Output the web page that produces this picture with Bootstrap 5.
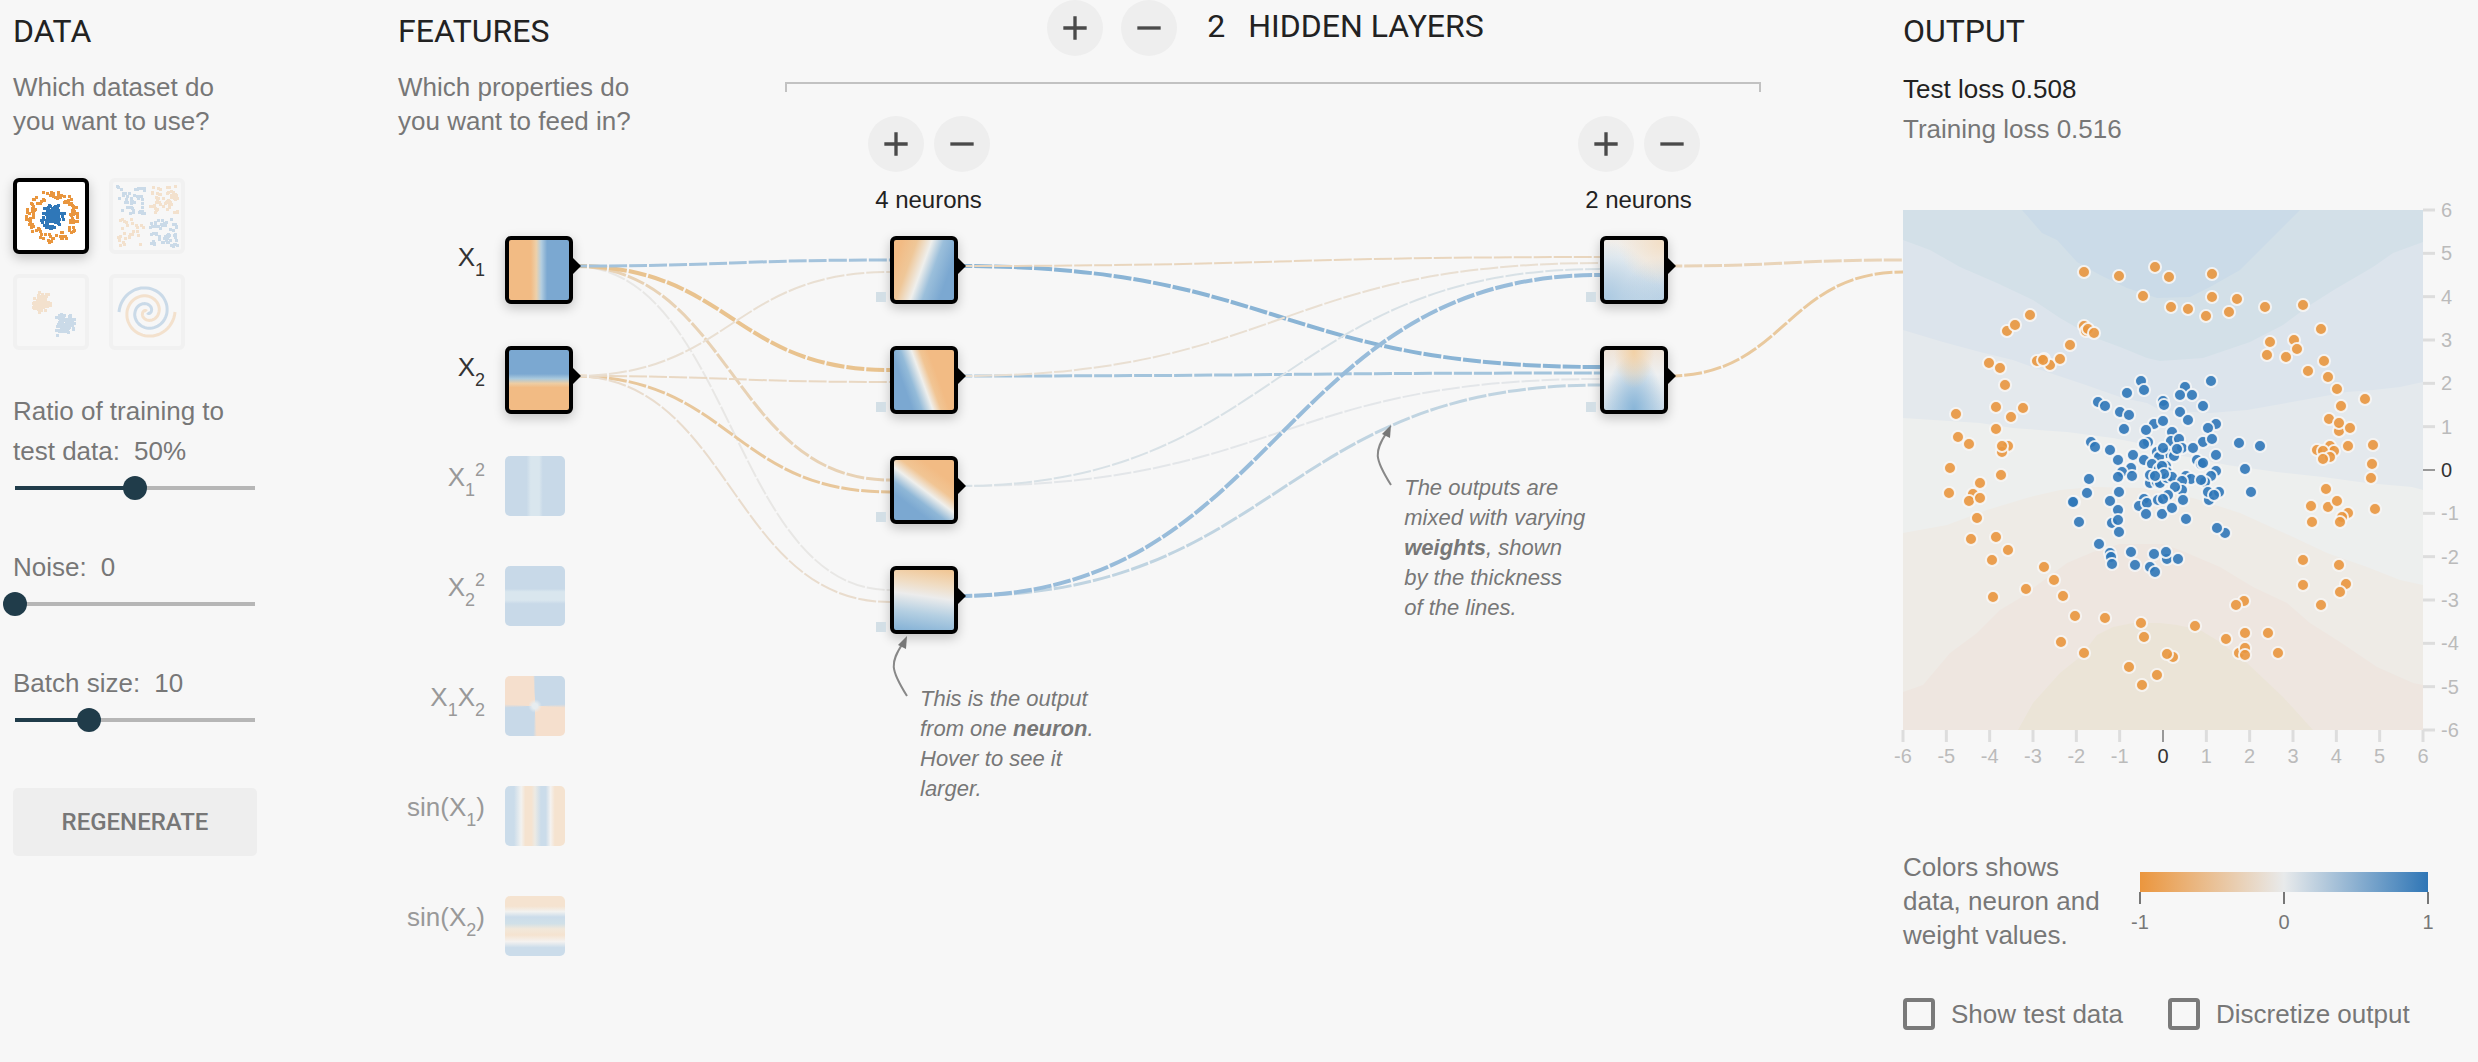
<!DOCTYPE html>
<html lang="en">
<head>
<meta charset="utf-8">
<meta name="viewport" content="width=device-width, initial-scale=1">
<title>Neural Network Playground</title>
<link href="https://cdn.jsdelivr.net/npm/bootstrap@5.3.0/dist/css/bootstrap.min.css" rel="stylesheet">
<style>
:root{--orange:#e9963e;--blue:#2f77b8;--ink:#222;--soft:#777}
body{background:#f7f7f7;color:var(--soft);font:400 26px/34px "Liberation Sans",Arial,sans-serif}
.board{padding-left:13px}
.links{width:100%;height:100%;pointer-events:none}
.links path{fill:none;stroke-dasharray:18 2;stroke-dashoffset:4}
.heading{font:400 32px/40px Roboto,sans-serif;color:var(--ink);margin:11px 0 19px}

/* data column */
.data-col{width:244px;margin-right:141px}
.sets{display:grid;grid-template-columns:repeat(2,76px);gap:20px;margin:40px 0 41px}
.set-btn{width:76px;height:76px;padding:0;border:4px solid #ddd;border-radius:6px;opacity:.22;background:transparent}
.set-btn.active{border-color:#000;background:#fff;opacity:1;box-shadow:0 4px 12px rgba(0,0,0,.22)}
.set-btn svg{display:block;margin:-4px}
.control{margin-bottom:47px}
.control label{display:block;line-height:40px;margin-bottom:5px}
.control output{margin-left:14px}
.slider{display:block;width:calc(100% + 20px);height:24px;margin:0 -10px;appearance:none;-webkit-appearance:none;background:transparent}
.slider::-webkit-slider-runnable-track{height:4px;background:linear-gradient(90deg,#203c4a var(--at),#b6b6b6 var(--at)) center/calc(100% - 24px) 4px no-repeat;border-radius:0}
.slider::-webkit-slider-thumb{-webkit-appearance:none;width:24px;height:24px;margin-top:-10px;border:0;border-radius:50%;background:#203c4a;box-shadow:none}
.regen{height:68px;margin-top:56px;border:0;border-radius:5px;background:#eee;color:var(--soft);font:500 24px/30px Roboto,sans-serif}

/* features */
.features-col{width:183px}
.features-col p{white-space:nowrap}
.features{margin-top:98px}
.feature{height:110px;gap:20px}
.feature .term{width:87px;text-align:right;line-height:42px;white-space:nowrap;color:#999}
.feature.on .term{color:#333}
.term sub,.term sup{position:static;font-size:18px;line-height:0}
.term sub{vertical-align:-10px}
.term sup{vertical-align:10px}
.tile{display:block;width:60px;height:60px;padding:0;border:0;border-radius:5px}
.unit{position:relative;z-index:1;width:68px;height:68px;padding:0;border:4px solid #000;border-radius:6px;background-origin:border-box;box-shadow:0 4px 12px rgba(0,0,0,.22)}
.unit::after{content:"";position:absolute;left:100%;top:18px;border:8px solid transparent;border-left-color:#000;border-right:0;margin-left:4px}
.bias{position:absolute;left:-18px;top:52px;width:10px;height:10px;background:#d3dfe6}
.p-x1{background-image:linear-gradient(90deg,#f2bb84 38%,#edd0a9 46%,#b5cfe0 53%,#7ba8d1 62%)}
.p-x2{background-image:linear-gradient(180deg,#7ba8d1 41%,#a9c9dd 48%,#edcda4 55%,#f2bb84 61%)}
.p-x1s{background:linear-gradient(90deg,#c8d9e8 36%,#d9e6ee 43%,#d9e6ee 57%,#c8d9e8 63%)}
.p-x2s{background:linear-gradient(180deg,#c8d9e8 38%,#d9e6ee 43%,#d9e6ee 57%,#c8d9e8 63%)}
.p-x1x2{background:radial-gradient(circle,#e7edf0 6%,transparent 16%),conic-gradient(#c8d9e8 24%,#f5dfcd 26% 49%,#c8d9e8 51% 74%,#f5dfcd 76% 99%,#c8d9e8)}
.p-sin1{background:linear-gradient(90deg,#cbdcea 15%,#f2f2f0 27%,#f5e3d0 34%,#f5e3d0 44%,#eceae4 50%,#cbdcea 60%,#cbdcea 68%,#f4f2f0 76%,#f5e3d0 83%)}
.p-sin2{background:linear-gradient(180deg,#f5e3d0 17%,#f2f2f0 26%,#cbdcea 35%,#d0e0e8 46%,#f2e8da 55%,#f5e3d0 65%,#f4f2f0 76%,#cbdcea 86%)}
.p-n1{background-image:linear-gradient(110deg,#f2bb84 15%,#efc798 31%,#efefec 47%,#9bbfdb 60%,#7ba8d1 78%)}
.p-n2{background-image:linear-gradient(70deg,#7ba8d1 26%,#94bbd9 36%,#efefec 48%,#f1c594 57%,#f2bb84 66%)}
.p-n3{background-image:linear-gradient(37deg,#7ba8d1 28%,#8fb7d7 38%,#efefec 50%,#f1c594 61%,#f2bb84 74%)}
.p-n4{background-image:linear-gradient(188deg,#f1c490 5%,#f0dcc2 28%,#ececec 45%,#b4cfe2 68%,#82b0d5 95%)}
.p-m1{background-image:radial-gradient(circle at 90% 8%,#f3dfc7,rgba(243,226,206,0) 50%),radial-gradient(circle at 5% 95%,#a9c8e1,rgba(169,200,225,0) 65%),radial-gradient(circle at 100% 100%,#b5cfe4,rgba(181,207,228,0) 50%),linear-gradient(180deg,#f1ece6,#f0f2f3 32%,#d3e0ea)}
.p-m2{background-image:radial-gradient(ellipse at 50% 8%,#f2d1a6,rgba(240,215,180,0) 42%),radial-gradient(ellipse at 50% 95%,#88b5d8,rgba(136,181,216,0) 62%),linear-gradient(180deg,#f0e2d4,#eef0f1 42%,#c4d8e8)}

/* network */
.network{min-width:0}
.round-btn{display:flex;align-items:center;justify-content:center;width:56px;height:56px;padding:0;border:0;border-radius:50%;background:#eee}
.round-btn svg{width:40px;height:40px;fill:#4a4a4a}
.bracketed{margin:0 142px 24px 204px}
.layer-count{font:400 32px/40px Roboto,sans-serif;color:var(--ink);height:56px;gap:18px;padding-right:15px}
.layer-count .num{margin-left:12px}
.layer-count h2{font:inherit;margin:0 0 0 5px}
.layer-count>span,.layer-count>h2{padding-bottom:4px}
.bracket{height:10px;margin-top:26px;border:solid #c2c2c2;border-width:2px 2px 0}
.layers{padding:0 199px 0 273px}
.layer{width:140px}
.layer-head{padding-left:9px;gap:12px}
.layer-head .pair{gap:10px}
.layer-head span{font-size:24px;line-height:32px;color:var(--ink)}
.stack{margin-top:20px;gap:42px}
.callout{position:absolute;z-index:2;font-size:22px;line-height:30px;font-style:italic;white-space:nowrap}
.callout svg{flex:none;width:30px;height:64px;stroke:#888;fill:none;stroke-width:2}
.callout p{margin:50px 0 0}
.callout.of-neuron{left:-4px;top:64px}
.callout.of-weights{left:60%;top:423px}

/* output */
.output-col{width:575px}
.loss{line-height:40px;margin:-1px 0 49px}
.loss .test{color:var(--ink)}
.plot{display:block;width:100%;overflow:visible}
.axis text,.scale-bar text{font-size:20px}
.axis line{stroke:#ddd;stroke-width:3}
.axis text{fill:#bbb}
.axis .zero line{stroke:#999;stroke-width:2}
.axis .zero text{fill:#333}
.dots circle{stroke:#f7f7f7;stroke-width:2;fill-opacity:.9;stroke-opacity:.9}
.legend-row{margin-top:76px}
.legend-row p{width:225px;margin:0}
.scale-bar{width:312px;height:62px;margin-top:22px}
.scale-bar text{fill:var(--soft);text-anchor:middle}
.scale-bar line{stroke:var(--soft);stroke-width:2}
.checks{margin-top:46px;gap:45px}
.checks label{line-height:32px}
.tick{flex:none;appearance:none;-webkit-appearance:none;width:32px;height:32px;margin:0;border:4px solid #7a7a7a;border-radius:4px;background:transparent}
.tick:checked{background:#7a7a7a}
.tick-pair{gap:16px}
</style>
</head>
<body>
<main class="board d-flex position-relative">
  <svg class="links position-absolute top-0 start-0" id="links" aria-hidden="true"></svg>

  <section class="data-col flex-shrink-0">
    <h2 class="heading">DATA</h2>
    <p class="m-0">Which dataset do<br>you want to use?</p>
    <div class="sets">
      <button type="button" class="set-btn active" aria-label="Circle"><svg width="76" height="76" data-set="circle"></svg></button>
      <button type="button" class="set-btn" aria-label="Exclusive or"><svg width="76" height="76" data-set="xor"></svg></button>
      <button type="button" class="set-btn" aria-label="Gaussian"><svg width="76" height="76" data-set="gauss"></svg></button>
      <button type="button" class="set-btn" aria-label="Spiral"><svg width="76" height="76" data-set="spiral"></svg></button>
    </div>
    <div class="control">
      <label for="ratio">Ratio of training to<br>test data:<output>50%</output></label>
      <input class="slider" type="range" id="ratio" min="10" max="90" value="50" style="--at:50%">
    </div>
    <div class="control">
      <label for="noise">Noise:<output>0</output></label>
      <input class="slider" type="range" id="noise" min="0" max="50" value="0" style="--at:0%">
    </div>
    <div class="control mb-0">
      <label for="batch">Batch size:<output>10</output></label>
      <input class="slider" type="range" id="batch" min="1" max="30" value="10" style="--at:31%">
    </div>
    <button type="button" class="regen w-100">REGENERATE</button>
  </section>

  <section class="features-col flex-shrink-0">
    <h2 class="heading">FEATURES</h2>
    <p class="m-0">Which properties do<br>you want to feed in?</p>
    <div class="features">
      <div class="feature on d-flex"><span class="term">X<sub>1</sub></span><button type="button" class="unit p-x1" data-layer="0" aria-label="X1"></button></div>
      <div class="feature on d-flex"><span class="term">X<sub>2</sub></span><button type="button" class="unit p-x2" data-layer="0" aria-label="X2"></button></div>
      <div class="feature d-flex"><span class="term">X<sub>1</sub><sup>2</sup></span><button type="button" class="tile p-x1s" aria-label="X1 squared"></button></div>
      <div class="feature d-flex"><span class="term">X<sub>2</sub><sup>2</sup></span><button type="button" class="tile p-x2s" aria-label="X2 squared"></button></div>
      <div class="feature d-flex"><span class="term">X<sub>1</sub>X<sub>2</sub></span><button type="button" class="tile p-x1x2" aria-label="X1 times X2"></button></div>
      <div class="feature d-flex"><span class="term">sin(X<sub>1</sub>)</span><button type="button" class="tile p-sin1" aria-label="sin X1"></button></div>
      <div class="feature d-flex"><span class="term">sin(X<sub>2</sub>)</span><button type="button" class="tile p-sin2" aria-label="sin X2"></button></div>
    </div>
  </section>

  <section class="network flex-grow-1 position-relative">
    <div class="bracketed">
      <div class="layer-count d-flex align-items-center justify-content-center">
        <button type="button" class="round-btn" aria-label="Add layer"><svg viewBox="0 0 24 24"><path d="M19 13h-6v6h-2v-6H5v-2h6V5h2v6h6z"/></svg></button>
        <button type="button" class="round-btn" aria-label="Remove layer"><svg viewBox="0 0 24 24"><path d="M19 13H5v-2h14z"/></svg></button>
        <span class="num">2</span>
        <h2>HIDDEN LAYERS</h2>
      </div>
      <div class="bracket"></div>
    </div>
    <div class="layers d-flex justify-content-between">
      <div class="layer">
        <div class="layer-head d-flex flex-column align-items-center">
          <div class="pair d-flex">
            <button type="button" class="round-btn" aria-label="Add neuron"><svg viewBox="0 0 24 24"><path d="M19 13h-6v6h-2v-6H5v-2h6V5h2v6h6z"/></svg></button>
            <button type="button" class="round-btn" aria-label="Remove neuron"><svg viewBox="0 0 24 24"><path d="M19 13H5v-2h14z"/></svg></button>
          </div>
          <span>4 neurons</span>
        </div>
        <div class="stack d-flex flex-column align-items-center">
          <div class="unit p-n1" data-layer="1"><i class="bias"></i></div>
          <div class="unit p-n2" data-layer="1"><i class="bias"></i></div>
          <div class="unit p-n3" data-layer="1"><i class="bias"></i></div>
          <div class="unit p-n4" data-layer="1"><i class="bias"></i>
            <div class="callout of-neuron d-flex">
              <svg viewBox="0 0 30 64"><path d="M17 62C0 35 0 29 13 9"/><path d="M17 2l-9 9 8 4z" fill="#777" stroke="none"/></svg>
              <p>This is the output<br>from one <b>neuron</b>.<br>Hover to see it<br>larger.</p>
            </div>
          </div>
        </div>
      </div>
      <div class="layer">
        <div class="layer-head d-flex flex-column align-items-center">
          <div class="pair d-flex">
            <button type="button" class="round-btn" aria-label="Add neuron"><svg viewBox="0 0 24 24"><path d="M19 13h-6v6h-2v-6H5v-2h6V5h2v6h6z"/></svg></button>
            <button type="button" class="round-btn" aria-label="Remove neuron"><svg viewBox="0 0 24 24"><path d="M19 13H5v-2h14z"/></svg></button>
          </div>
          <span>2 neurons</span>
        </div>
        <div class="stack d-flex flex-column align-items-center">
          <div class="unit p-m1" data-layer="2"><i class="bias"></i></div>
          <div class="unit p-m2" data-layer="2"><i class="bias"></i></div>
        </div>
      </div>
    </div>
    <div class="callout of-weights d-flex">
      <svg viewBox="0 0 30 64"><path d="M17 62C0 35 0 29 13 9"/><path d="M17 2l-9 9 8 4z" fill="#777" stroke="none"/></svg>
      <p>The outputs are<br>mixed with varying<br><b>weights</b>, shown<br>by the thickness<br>of the lines.</p>
    </div>
  </section>

  <section class="output-col flex-shrink-0" id="output">
    <h2 class="heading">OUTPUT</h2>
    <div class="loss">
      <div class="test">Test loss 0.508</div>
      <div>Training loss 0.516</div>
    </div>
    <svg class="plot" viewBox="0 -12 575 576" role="img" aria-label="Network output over both inputs">
      <rect width="520" height="520" fill="#cbdbe8"/>
      <g>
        <path fill="#d3e0e8" d="M0 0H119L139 23 154 30 174 52 197 65 224 78 254 88 287 87 307 77 337 60 367 30 397 0H520V520H0z"/>
        <path fill="#dce4ec" d="M0 30L27 40 57 57 94 73 130 90 157 108 190 127 217 137 244 148 257 151 300 148 347 132 380 115 407 95 434 78 470 57 490 43 520 32V520H0z"/>
        <path fill="#e4e9ed" d="M0 120L40 132 77 142 110 150 144 162 177 173 220 188 244 193 257 200 307 203 344 200 400 190 444 182 470 180 497 177 520 172V520H0z"/>
        <path fill="#edefee" d="M0 208L77 213 110 218 164 222 210 228 240 234 280 246 324 255 374 262 420 267 464 273 509 277 520 280V520H0z"/>
        <path fill="#eeebe6" d="M0 323L44 315 84 300 127 287 157 280 190 277 240 278 290 288 337 303 390 327 424 343 464 357 497 370 520 375V520H0z"/>
        <path fill="#eee6e0" d="M0 482L20 475 47 443 74 423 97 400 117 388 137 373 164 353 190 342 217 334 260 334 277 340 317 357 350 377 384 393 407 413 437 432 474 457 510 473 520 475V520H0z"/>
        <path fill="#ebe4d7" d="M115 520L130 493 157 463 177 447 194 425 210 417 230 413 257 413 274 415 297 420 317 432 344 453 380 487 410 520z"/>
      </g>
      <g class="dots" id="dots"></g>
      <g class="axis" id="axis"></g>
    </svg>
    <div class="legend-row d-flex">
      <p>Colors shows<br>data, neuron and<br>weight values.</p>
      <svg class="scale-bar" viewBox="-12 0 312 62">
        <defs><linearGradient id="ramp"><stop offset="0" stop-color="#eb963e"/><stop offset=".5" stop-color="#e8eaeb"/><stop offset="1" stop-color="#2f76b6"/></linearGradient></defs>
        <rect width="288" height="20" fill="url(#ramp)"/>
        <line x1="0" x2="0" y1="20" y2="32"/><line x1="144" x2="144" y1="20" y2="32"/><line x1="288" x2="288" y1="20" y2="32"/>
        <text x="0" y="57">-1</text><text x="144" y="57">0</text><text x="288" y="57">1</text>
      </svg>
    </div>
    <div class="checks d-flex">
      <div class="tick-pair d-flex"><input class="tick" type="checkbox" id="show-test"><label for="show-test">Show test data</label></div>
      <div class="tick-pair d-flex"><input class="tick" type="checkbox" id="discretize"><label for="discretize">Discretize output</label></div>
    </div>
  </section>
</main>

<script src="https://cdn.jsdelivr.net/npm/bootstrap@5.3.0/dist/js/bootstrap.bundle.min.js"></script>
<script>
const NS = 'http://www.w3.org/2000/svg';
const ORANGE = '#e9963e', BLUE = '#2f77b8';
function add(parent, tag, attrs, text) {
  const el = document.createElementNS(NS, tag);
  for (const k in attrs) el.setAttribute(k, attrs[k]);
  if (text !== undefined) el.textContent = text;
  parent.appendChild(el);
  return el;
}
const pairs = s => s.trim().split(/\s+/).map(p => p.split(',').map(Number));

// Training points, in plot units (520 x 520).
const outer = pairs(`181,62 216,66 252,57 266,67 240,86 268,97 127,105 104,121 112,115 181,116 183,121 185,119 191,123 167,135 86,153 97,158
134,151 141,149 147,155 140,150 157,149 102,175 93,197 120,198 108,207 53,204 93,219 55,227 66,234 105,236 99,242 99,236 47,258 98,265
77,273 46,283 70,284 66,291 77,288 74,308 93,327 68,329 105,340 89,350 141,357 151,370 123,379 90,387 160,386 172,406 202,408 238,413
241,427 158,432 181,443 226,457 239,475 254,465 270,447 264,444 309,64 309,87 334,89 285,99 303,106 326,102 362,97 400,95 418,119
391,130 394,139 367,132 364,145 383,147 421,151 405,161 425,167 434,179 462,189 438,196 426,209 436,221 436,213 447,218 445,236
427,236 414,240 431,241 420,241 427,247 420,249 470,235 469,254 468,268 423,279 408,296 425,297 434,291 445,303 439,307 437,312
409,312 472,299 400,350 436,355 400,375 443,374 437,382 418,395 341,391 333,395 292,416 342,423 323,429 365,423 336,443 342,438
342,445 375,443`);
const inner = pairs(`238,171 241,180 224,183 308,171 282,177 277,185 289,185 195,192 202,196 217,202 226,205 260,191 261,195 300,196
277,202 285,210 221,219 251,214 260,211 243,220 313,214 305,218 269,222 268,231 276,229 300,232 309,229 336,233 357,236 188,232
192,237 207,240 245,232 241,234 254,242 264,243 279,238 290,238 271,246 256,247 260,238 274,239 230,245 313,245 215,250 241,250
294,250 298,254 300,253 228,258 249,254 263,256 256,259 264,262 259,256 342,259 313,261 219,262 215,267 229,266 247,273 254,272
257,273 264,268 269,267 247,265 261,264 252,266 283,266 288,269 279,271 308,266 302,272 298,270 186,269 216,282 184,283 279,280
272,277 348,282 306,290 305,282 316,282 311,285 171,292 170,292 207,291 241,289 236,296 244,293 255,290 265,285 260,289 280,290
215,300 243,304 259,304 269,298 209,313 215,310 216,322 176,312 283,309 322,323 314,318 196,334 207,343 208,347 209,354 228,342
232,355 251,344 264,349 263,342 275,349 247,357 252,362`);
const dots = document.getElementById('dots');
for (const [set, fill] of [[inner, BLUE], [outer, ORANGE]])
  for (const [cx, cy] of set) add(dots, 'circle', {cx, cy, r: 6, fill});

// Axes on the bottom and right edges.
const axis = document.getElementById('axis');
for (let v = -6; v <= 6; v++) {
  const g = add(axis, 'g', v === 0 ? {class: 'zero'} : {});
  const x = 260 + v * 520 / 12, y = 260 - v * 520 / 12;
  add(g, 'line', {x1: x, x2: x, y1: 520, y2: 532});
  add(g, 'text', {x, y: 553, 'text-anchor': 'middle'}, v);
  add(g, 'line', {x1: 520, x2: 532, y1: y, y2: y});
  add(g, 'text', {x: 538, y: y + 7}, v);
}

// Dataset thumbnails.
let seed = 7;
const rnd = () => (seed = (seed * 16807) % 2147483647) / 2147483647;
const bell = () => (rnd() + rnd() + rnd() - 1.5) * 1.5;
const thumb = name => {
  const svg = document.querySelector(`[data-set="${name}"]`);
  return (x, y, fill) => add(svg, 'rect', {x: Math.round(x) - 1, y: Math.round(y) - 1, width: 3, height: 3, fill});
};
let put = thumb('circle');
inner.forEach(([x, y]) => put(39 + (x - 260) * .12, 38 + (y - 260) * .12, BLUE));
outer.forEach(([x, y]) => put(39 + (x - 260) * .12, 38 + (y - 260) * .12, ORANGE));
put = thumb('xor');
for (let i = 0; i < 190; i++) {
  const sx = rnd() < .5 ? -1 : 1, sy = rnd() < .5 ? -1 : 1;
  put(38 + sx * (3 + rnd() * 27), 38 + sy * (3 + rnd() * 27), sx === sy ? BLUE : ORANGE);
}
put = thumb('gauss');
for (let i = 0; i < 110; i++) {
  put(28 + bell() * 5, 28 + bell() * 5, ORANGE);
  put(51 + bell() * 5, 50 + bell() * 6, BLUE);
}
const spiral = document.querySelector('[data-set="spiral"]');
for (const [turn, stroke] of [[0, BLUE], [Math.PI, ORANGE]]) {
  let d = '';
  for (let t = 1; t > .02; t -= .01) {
    const a = turn + Math.PI + 3.5 * Math.PI * (1 - t);
    d += (d ? 'L' : 'M') + (38 + 28 * t * Math.cos(a)).toFixed(1) + ' ' + (38 + 28 * t * Math.sin(a)).toFixed(1);
  }
  add(spiral, 'path', {d, stroke, fill: 'none', 'stroke-width': 3});
}

// Weights: [from layer, from node, to node, stroke, width]
const weights = [
  [0,0,3,'#e8e7e5',2],[0,0,2,'#e8d2b5',3],[0,0,1,'#e9c38f',4],[0,0,0,'#a4c3dc',3],
  [0,1,2,'#e8c79b',3],[0,1,3,'#e9dccd',2],[0,1,1,'#e9d8c3',2],[0,1,0,'#e9dfd2',2],
  [1,0,1,'#8ab4d5',4],[1,0,0,'#e9d6be',2],[1,1,1,'#a3c4dc',3],[1,1,0,'#e9dfd2',2],
  [1,2,1,'#e3e6e9',2],[1,2,0,'#d8e1e6',2],[1,3,1,'#c0d4e1',3],[1,3,0,'#98bcda',4],
  [2,0,0,'#e9d4b9',3],[2,1,0,'#e9c99e',3]
];
const links = document.getElementById('links');
function drawLinks() {
  links.replaceChildren();
  const layer = [0, 1, 2].map(n => [...document.querySelectorAll(`[data-layer="${n}"]`)].map(e => e.getBoundingClientRect()));
  const box = links.getBoundingClientRect();
  const out = document.getElementById('output').getBoundingClientRect();
  layer.push([{left: out.left, top: layer[0][0].top}]);
  for (const [l, i, j, stroke, width] of weights) {
    const a = layer[l][i], b = layer[l + 1][j], n = layer[l].length;
    const x1 = a.right - box.left, y1 = a.top + 30 - box.top;
    const x2 = b.left - box.left, y2 = b.top + 30 - box.top + (i - (n - 1) / 2) / n * 24;
    const m = (x1 + x2) / 2;
    add(links, 'path', {d: `M${x1} ${y1}C${m} ${y1} ${m} ${y2} ${x2} ${y2}`, stroke, 'stroke-width': width});
  }
}
drawLinks();
addEventListener('resize', drawLinks);

// Sliders fill their track up to the thumb.
document.querySelectorAll('.slider').forEach(s => s.addEventListener('input', () => {
  s.style.setProperty('--at', (s.value - s.min) / (s.max - s.min) * 100 + '%');
  s.closest('.control').querySelector('output').textContent = s.value + (s.id === 'ratio' ? '%' : '');
}));
</script>
</body>
</html>
